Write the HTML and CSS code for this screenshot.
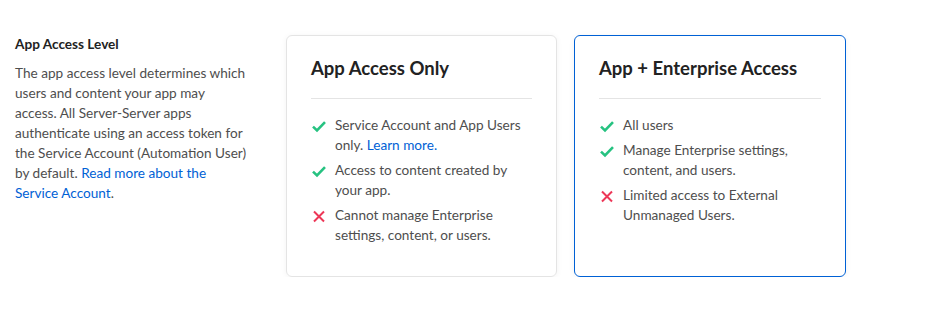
FILE: index.html
```html
<!DOCTYPE html>
<html lang="en">
<head>
    <meta charset="UTF-8">
    <meta name="viewport" content="width=device-width, initial-scale=1.0">
    <title>App Access Level</title>
    <link rel="stylesheet" href="styles.css">
</head>
<body>
    <div class="setting-row">
        <div class="setting-info">
            <div class="setting-title">App Access Level</div>
            <p class="setting-description">
                The app access level determines which users and content your app may access. All Server-Server apps authenticate using an access token for the Service Account (Automation User) by default. <a href="#">Read more about the Service Account</a>.
            </p>
        </div>

        <div class="access-cards">
            <div class="access-card">
                <div class="card-title">App Access Only</div>
                <ul class="feature-list">
                    <li class="feature yes">
                        <svg class="feature-icon" viewBox="0 0 16 16"><path d="M2 8.6 L6 12.4 L14 4.2" /></svg>
                        <span>Service Account and App Users only. <a href="#">Learn more.</a></span>
                    </li>
                    <li class="feature yes">
                        <svg class="feature-icon" viewBox="0 0 16 16"><path d="M2 8.6 L6 12.4 L14 4.2" /></svg>
                        <span>Access to content created by your app.</span>
                    </li>
                    <li class="feature no">
                        <svg class="feature-icon" viewBox="0 0 16 16"><path d="M3 3.5 L13 13.5 M13 3.5 L3 13.5" /></svg>
                        <span>Cannot manage Enterprise settings, content, or users.</span>
                    </li>
                </ul>
            </div>

            <div class="access-card selected">
                <div class="card-title">App + Enterprise Access</div>
                <ul class="feature-list">
                    <li class="feature yes">
                        <svg class="feature-icon" viewBox="0 0 16 16"><path d="M2 8.6 L6 12.4 L14 4.2" /></svg>
                        <span>All users</span>
                    </li>
                    <li class="feature yes">
                        <svg class="feature-icon" viewBox="0 0 16 16"><path d="M2 8.6 L6 12.4 L14 4.2" /></svg>
                        <span>Manage Enterprise settings, content, and users.</span>
                    </li>
                    <li class="feature no">
                        <svg class="feature-icon" viewBox="0 0 16 16"><path d="M3 3.5 L13 13.5 M13 3.5 L3 13.5" /></svg>
                        <span>Limited access to External Unmanaged Users.</span>
                    </li>
                </ul>
            </div>
        </div>
    </div>
</body>
</html>
```

FILE: styles.css
```css
* {
    margin: 0;
    padding: 0;
    box-sizing: border-box;
}

body {
    font-family: Lato, "Open Sans", "Liberation Sans", sans-serif;
    font-size: 13.6px;
    line-height: 20px;
    color: #4e4e4e;
    background: #fff;
}

a {
    color: #0061d5;
    text-decoration: none;
}

.setting-row {
    display: flex;
    padding: 34px 15px 0;
    gap: 39px;
}

/* Colonne de gauche */
.setting-info {
    width: 232px;
    flex-shrink: 0;
}

.setting-title {
    font-weight: 700;
    color: #222;
    margin-bottom: 9px;
}

.setting-description {
    line-height: 20px;
}

/* Cartes */
.access-cards {
    display: flex;
    gap: 17px;
    margin-top: 1px;
}

.access-card {
    width: 271px;
    border: 1px solid #e4e4e4;
    border-radius: 6px;
    padding: 19px 24px 31px;
    box-shadow: 0 1px 6px rgba(0, 0, 0, 0.05);
}

.access-card.selected {
    width: 272px;
    border-color: #0061d5;
}

.card-title {
    font-size: 18.5px;
    font-weight: 700;
    line-height: 26px;
    color: #222;
    padding-bottom: 17px;
    border-bottom: 1px solid #e4e4e4;
    margin-bottom: 16px;
}

.feature-list {
    list-style: none;
}

.feature {
    display: flex;
    align-items: flex-start;
    margin-bottom: 5px;
}

.feature:last-child {
    margin-bottom: 0;
}

.feature-icon {
    width: 16px;
    height: 16px;
    flex-shrink: 0;
    margin: 3px 8px 0 0;
    fill: none;
    stroke-width: 2.6;
}

.feature.yes .feature-icon { stroke: #26c281; }
.feature.no .feature-icon { stroke: #ed3757; stroke-width: 2; }
```
